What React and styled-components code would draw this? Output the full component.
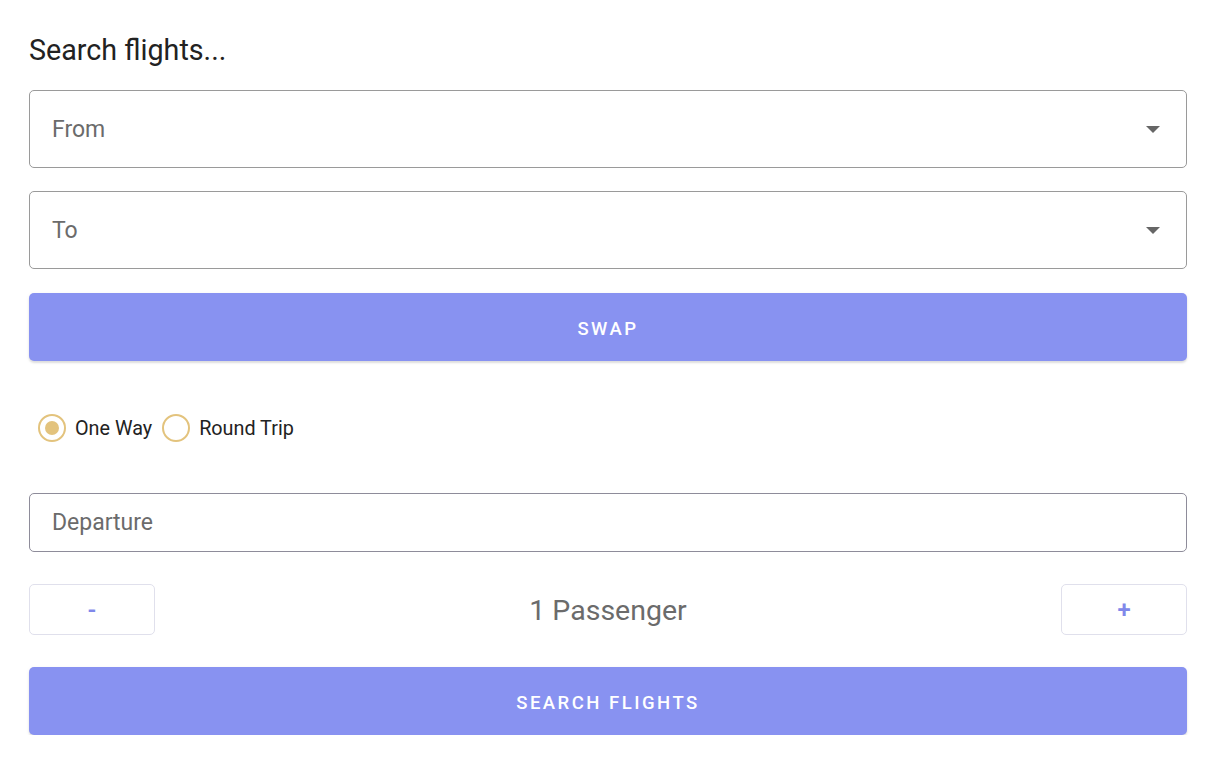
import React, { useState } from "react";
import styled, { createGlobalStyle } from "styled-components";

const Global = createGlobalStyle`
  html, body { margin: 0; padding: 0; background: #fff; }
  body { font-family: Roboto, "Noto Sans", Arial, sans-serif; }
  * { box-sizing: border-box; }
`;

const Page = styled.div`
  width: 1220px;
  padding: 28px 33px 0 29px;
  display: flex;
  flex-direction: column;
`;

const Title = styled.h1`
  margin: 0 0 18px;
  font-size: 28.7px;
  line-height: 44px;
  font-weight: 400;
  color: #222;
`;

const Select = styled.div`
  height: 78px;
  border: 1px solid #9a9a9a;
  border-radius: 5px;
  display: flex;
  align-items: center;
  justify-content: space-between;
  padding: 0 26px 0 22px;
  margin-bottom: ${(p) => p.$mb || 0}px;
  font-size: 23px;
  color: #6b6b6b;
`;

const Caret = styled.span`
  width: 0;
  height: 0;
  border-left: 7px solid transparent;
  border-right: 7px solid transparent;
  border-top: 7px solid #666;
`;

const PrimaryButton = styled.button`
  height: 68px;
  width: 100%;
  border: none;
  border-radius: 5px;
  background: #8892f1;
  color: #fff;
  font-family: Roboto, Arial, sans-serif;
  font-size: 18.5px;
  font-weight: 500;
  letter-spacing: 2.5px;
  padding: 3px 0 0;
  box-shadow: 0 2px 2px rgba(0, 0, 0, 0.1), 0 1px 4px rgba(0, 0, 0, 0.06);
  cursor: pointer;
  margin-bottom: ${(p) => p.$mb || 0}px;
`;

const RadioRow = styled.div`
  display: flex;
  align-items: center;
  height: 132px;
  padding: 2px 0 0 9px;
`;

const RadioLabel = styled.label`
  display: flex;
  align-items: center;
  gap: 9px;
  font-size: 19.8px;
  color: #222;
  cursor: pointer;
  margin-right: 10px;
`;

const RadioCircle = styled.span`
  width: 28px;
  height: 28px;
  border-radius: 50%;
  border: 2.5px solid #e3c37d;
  display: flex;
  align-items: center;
  justify-content: center;
  &::after {
    content: "";
    width: 14px;
    height: 14px;
    border-radius: 50%;
    background: ${(p) => (p.$checked ? "#e3c37d" : "transparent")};
  }
`;

const Input = styled.div`
  height: 59px;
  border: 1px solid #8e8c9a;
  border-radius: 5px;
  display: flex;
  align-items: center;
  padding: 0 22px;
  font-size: 23px;
  color: #6b6b6b;
`;

const CounterRow = styled.div`
  display: flex;
  align-items: center;
  justify-content: space-between;
  margin: 32px 0 32px;
`;

const CounterButton = styled.button`
  width: 126px;
  height: 51px;
  border: 1px solid #e0e0ec;
  border-radius: 5px;
  background: #fff;
  color: #8088ea;
  font-family: Roboto, Arial, sans-serif;
  font-size: 24px;
  font-weight: 600;
  cursor: pointer;
`;

const Count = styled.span`
  font-size: 28.5px;
  color: #6b6b6b;
  line-height: 1;
  padding-top: 3px;
`;

export default function App() {
  const [trip, setTrip] = useState("one");
  const [count, setCount] = useState(1);
  return (
    <>
      <Global />
      <Page>
        <Title>Search flights...</Title>
        <Select $mb={23}>
          <span>From</span>
          <Caret />
        </Select>
        <Select $mb={24}>
          <span>To</span>
          <Caret />
        </Select>
        <PrimaryButton>SWAP</PrimaryButton>
        <RadioRow>
          <RadioLabel onClick={() => setTrip("one")}>
            <RadioCircle $checked={trip === "one"} />
            One Way
          </RadioLabel>
          <RadioLabel onClick={() => setTrip("round")}>
            <RadioCircle $checked={trip === "round"} />
            Round Trip
          </RadioLabel>
        </RadioRow>
        <Input>Departure</Input>
        <CounterRow>
          <CounterButton onClick={() => setCount(Math.max(1, count - 1))}>-</CounterButton>
          <Count>{count} Passenger{count > 1 ? "s" : ""}</Count>
          <CounterButton onClick={() => setCount(count + 1)}>+</CounterButton>
        </CounterRow>
        <PrimaryButton>SEARCH FLIGHTS</PrimaryButton>
      </Page>
    </>
  );
}
